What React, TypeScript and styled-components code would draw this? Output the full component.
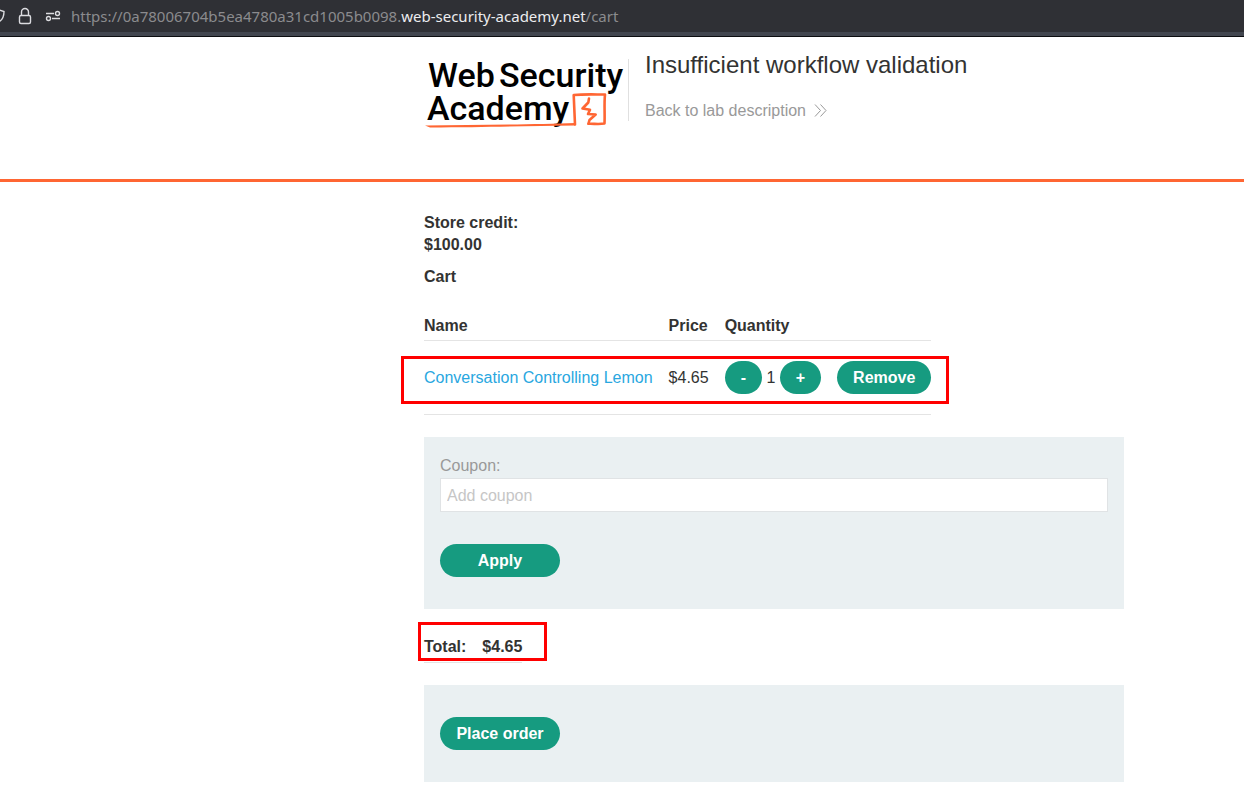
import React from "react";
import styled, { createGlobalStyle } from "styled-components";

const GlobalStyle = createGlobalStyle`
  *, *::before, *::after { box-sizing: border-box; }
  body {
    margin: 0;
    background: #fff;
    color: #333332;
    font: 16px/22px "Liberation Sans", Arial, sans-serif;
  }
`;

const AddressBar = styled.header`
  display: flex;
  align-items: center;
  height: 37px;
  overflow: hidden;
  background: #2f3035;
  border-bottom: 1px solid #0c0d10;
  box-shadow: inset 0 -4px #42464f;
  padding-bottom: 4px;
  color: #fbfbfe;
`;

const BarIcons = styled.svg`
  flex: none;
  width: 71px;
  height: 32px;
`;

const Address = styled.div`
  color: #8b8b8e;
  font: 15px/22px "Noto Sans", sans-serif;
  white-space: nowrap;
`;

const Domain = styled.span`
  color: #ececef;
`;

const columnInset = "padding-left: 424px; padding-right: 120px;";

const LabHeader = styled.header`
  ${columnInset}
  display: flex;
  align-items: flex-start;
  height: 145px;
  border-bottom: 3px solid #ff6633;
`;

const LogoLink = styled.a`
  flex: none;
  display: block;
  padding-top: 15px;
`;

const LogoArt = styled.svg`
  display: block;
  width: 204px;
  height: 84px;
`;

const LabInfo = styled.div`
  margin-top: 22px;
  height: 62px;
  padding-left: 16px;
  border-left: 1px solid #e0e0e0;
`;

const LabTitle = styled.h1`
  margin: -8px 0 21px;
  font-size: 24px;
  line-height: 28px;
  font-weight: 400;
  white-space: nowrap;
`;

const BackLink = styled.a`
  display: flex;
  align-items: center;
  gap: 8px;
  color: #999;
  text-decoration: none;
  white-space: nowrap;
`;

const Main = styled.main`
  ${columnInset}
  padding-top: 30px;
  padding-bottom: 24px;
`;

const Line = styled.p`
  margin: 0;
  font-weight: 700;
`;

const Heading = styled.h2`
  margin: 10px 0 27px;
  font-size: 16px;
  font-weight: 700;
`;

const TableFrame = styled.div`
  position: relative;
  width: fit-content;
`;

const Table = styled.table<{ $summary?: boolean }>`
  border-collapse: collapse;
  white-space: nowrap;
  th, td {
    padding: 0 16px ${(p) => (p.$summary ? 4 : 3)}px 0;
    border-bottom: 1px solid #e4e4e4;
    text-align: left;
  }
  td { padding-top: 20px; padding-bottom: 20px; }
  th:last-child, td:last-child { padding-right: 0; }
`;

const ItemLink = styled.a`
  color: #29a7df;
  text-decoration: none;
`;

const Quantity = styled.div`
  display: flex;
  align-items: center;
  white-space: pre;
`;

const Button = styled.button<{ $wide?: boolean }>`
  display: block;
  height: 33px;
  min-width: ${(p) => (p.$wide ? "120px" : "0")};
  padding: 0 16px;
  border: 0;
  border-radius: 17px;
  background: #169b80;
  color: #fff;
  font: 700 16px/33px "Liberation Sans", Arial, sans-serif;
  cursor: pointer;
`;

const Panel = styled.form<{ $tall?: boolean }>`
  margin-top: 22px;
  padding: ${(p) => (p.$tall ? "32px 16px" : "18px 16px 32px")};
  background: #eaf0f2;
`;

const Label = styled.label`
  display: block;
  color: #999;
`;

const TextInput = styled.input`
  display: block;
  width: 100%;
  height: 34px;
  margin: 1px 0 32px;
  padding: 1px 6px 0;
  border: 1px solid #e0e3e5;
  border-radius: 0;
  background: #fff;
  color: #333332;
  font: inherit;
  &::placeholder { color: #c6c6c6; opacity: 1; }
`;

const Highlight = styled.span<{ $inset: string }>`
  position: absolute;
  inset: ${(p) => p.$inset};
  border: 3px solid #f00;
  pointer-events: none;
`;

const TotalFrame = styled(TableFrame)`
  margin-top: 27px;
`;

function Logo() {
  return (
    <LogoArt viewBox="0 0 204 84" role="img" aria-label="Web Security Academy">
      <g fill="#000" fontFamily="Roboto, sans-serif" fontWeight="500" fontSize="34">
        <text x="4" y="35">Web</text>
        <text x="75" y="35">Security</text>
        <text x="3" y="68">Academy</text>
      </g>
      <g fill="none" stroke="#ff6633" strokeWidth="2.6" strokeLinejoin="round" strokeLinecap="round">
        <path d="M151 72.500L149.700 43C160 42 171 42.500 181 42.500C180 52 181 62 180.500 71.500C175 72.500 169 71.500 164.500 71.800" />
        <path d="M165 46.500L164.300 50.500L158.500 56.500L166 57.800L164 62L171.700 62.500L165.500 68L164.500 71.500" />
      </g>
      <path d="M1 73.500C50 73 110 72.500 151 71L151 73.500C100 74 60 75.500 6 75.500Z" fill="#ff6633" />
    </LogoArt>
  );
}

export default function App() {
  return (
    <>
      <GlobalStyle />
      <AddressBar>
        <BarIcons viewBox="0 0 71 32" fill="none" stroke="#dcdce0" strokeWidth="1.4" aria-hidden="true">
          <path d="M-2 9.500L4 11.500C4 17 2 20.500-2 22.500" />
          <rect x="19.500" y="15.500" width="11" height="8" rx="1.500" />
          <path d="M21.500 15V12a3.500 3.500 0 0 1 7 0v3" />
          <path d="M46 13.500h8M52 18.500h8" />
          <circle cx="57.500" cy="13.500" r="2" />
          <circle cx="48.500" cy="18.500" r="2" />
        </BarIcons>
        <Address>
          https://0a78006704b5ea4780a31cd1005b0098.<Domain>web-security-academy.net</Domain>/cart
        </Address>
      </AddressBar>
      <LabHeader>
        <LogoLink href="#academy"><Logo /></LogoLink>
        <LabInfo>
          <LabTitle>Insufficient workflow validation</LabTitle>
          <BackLink href="#lab">
            Back to lab description
            <svg width="13" height="14" viewBox="0 0 13 14" fill="none" stroke="#999" aria-hidden="true">
              <path d="M1 .5L6.500 6.500L1 12.500M6.500 .5L12 6.500L6.500 12.500" />
            </svg>
          </BackLink>
        </LabInfo>
      </LabHeader>
      <Main>
        <Line>Store credit:</Line>
        <Line>$100.00</Line>
        <Heading>Cart</Heading>
        <TableFrame>
          <Table>
            <thead>
              <tr><th>Name</th><th>Price</th><th>Quantity</th><th /></tr>
            </thead>
            <tbody>
              <tr>
                <td><ItemLink href="#product">Conversation Controlling Lemon</ItemLink></td>
                <td>$4.65</td>
                <td>
                  <Quantity>
                    <Button type="button">-</Button>
                    <span>{" 1 "}</span>
                    <Button type="button">+</Button>
                  </Quantity>
                </td>
                <td><Button type="button">Remove</Button></td>
              </tr>
            </tbody>
          </Table>
          <Highlight $inset="41px -18px 11px -23px" />
        </TableFrame>
        <Panel onSubmit={(e) => e.preventDefault()}>
          <Label htmlFor="coupon">Coupon:</Label>
          <TextInput id="coupon" placeholder="Add coupon" />
          <Button $wide type="submit">Apply</Button>
        </Panel>
        <TotalFrame>
          <Table $summary>
            <tbody>
              <tr><th scope="row">Total:</th><th>$4.65</th></tr>
            </tbody>
          </Table>
          <Highlight $inset="-14px -25px 2px -6px" />
        </TotalFrame>
        <Panel $tall onSubmit={(e) => e.preventDefault()}>
          <Button $wide type="submit">Place order</Button>
        </Panel>
      </Main>
    </>
  );
}
